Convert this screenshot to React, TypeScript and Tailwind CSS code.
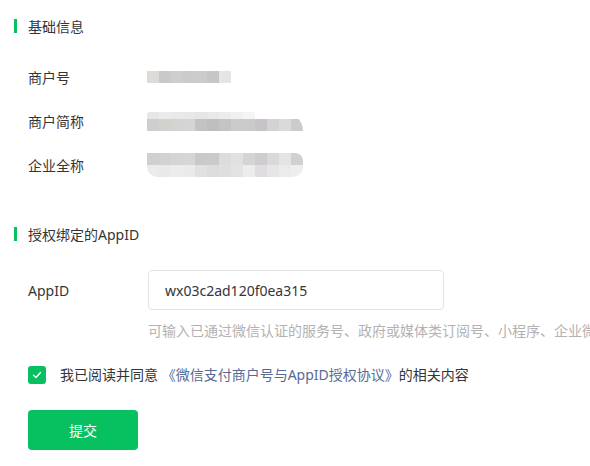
const row1 = ["#dedad8", "#c9c8cb", "#cfcecc", "#cccbcb", "#cdccca", "#c6c5c8", "#e6e5e6"];
const row2a = ["#e6e6e6", "#ebebeb", "#e9e9e9", "#e8e8e8", "#e6e6e6", "#e9e9e9", "#ececec", "#f0f0f0", "#f4f4f4", "#ffffff", "#ffffff", "#ffffff", "#ffffff"];
const row2b = ["#cfcecc", "#d1d1ce", "#d3d3d2", "#d3d5d6", "#c3c2c5", "#bebdc0", "#c4c3c5", "#cccbca", "#cbcaca", "#c7c3c8", "#d3d3d3", "#dadad9", "#cbcacd"];
const row3a = ["#d1d0d0", "#d2d2d1", "#d5d5d4", "#d6d6d6", "#c9c8cb", "#cacaca", "#dbdcdc", "#e0e1e1", "#d6d3d5", "#d0cbcf", "#d9d9d9", "#e4e4e4", "#d2cfd3"];
const row3b = ["#ebebeb", "#e9e9e9", "#ececec", "#eaeaea", "#e2e1e2", "#dcdcdc", "#dfdfdf", "#e3e3e3", "#ececec", "#e0dde0", "#e6e6e6", "#ebebeb", "#eeeeee"];

function Blocks({ colors, h = 12 }: { colors: string[]; h?: number }) {
  return (
    <div className="flex">
      {colors.map((c, i) => (
        <div key={i} className="w-[12px]" style={{ backgroundColor: c, height: h }} />
      ))}
    </div>
  );
}

function SectionTitle({ children }: { children: React.ReactNode }) {
  return (
    <div className="flex items-center h-[20px]">
      <div className="w-[3px] h-[14px] bg-[#07c160] ml-[14px] mr-[11px]" />
      <span className="text-[14px] text-[#353535]">{children}</span>
    </div>
  );
}

export default function App() {
  return (
    <div
      className="w-[590px] h-[466px] bg-white overflow-hidden text-[14px] text-[#353535]"
      style={{ fontFamily: '"Noto Sans", "Noto Sans CJK SC", sans-serif' }}
    >
      <div className="pt-[16px]">
        <SectionTitle>基础信息</SectionTitle>
      </div>

      <div className="flex items-center mt-[30px] h-[22px]">
        <span className="w-[147px] pl-[28px]">商户号</span>
        <Blocks colors={row1} />
      </div>

      <div className="flex items-center mt-[21px] h-[24px]">
        <span className="w-[147px] pl-[28px]">商户简称</span>
        <div className="flex flex-col rounded-tl-[6px] rounded-tr-[40px] overflow-hidden">
          <Blocks colors={row2a} h={7} />
          <Blocks colors={row2b} />
        </div>
      </div>

      <div className="flex items-center mt-[20px] h-[24px]">
        <span className="w-[147px] pl-[28px]">企业全称</span>
        <div className="flex flex-col rounded-b-[10px] rounded-tr-[8px] overflow-hidden">
          <Blocks colors={row3a} />
          <Blocks colors={row3b} />
        </div>
      </div>

      <div className="mt-[47px]">
        <SectionTitle>授权绑定的AppID</SectionTitle>
      </div>

      <div className="flex items-center mt-[26px]">
        <span className="w-[148px] pl-[28px]">AppID</span>
        <div className="w-[296px] h-[40px] border border-[#e2e2e2] rounded-[4px] flex items-center pl-[16px] text-[#353535]">
          wx03c2ad120f0ea315
        </div>
      </div>

      <div className="ml-[148px] mt-[10px] whitespace-nowrap text-[#b2b2b2]">
        可输入已通过微信认证的服务号、政府或媒体类订阅号、小程序、企业微信
      </div>

      <div className="flex items-center mt-[23px] pl-[28px]">
        <div className="w-[18px] h-[18px] rounded-[3px] bg-[#07c160] flex items-center justify-center">
          <svg width="12" height="12" viewBox="0 0 12 12" fill="none">
            <path d="M2.5 6.2 L5 8.5 L9.5 3.5" stroke="white" strokeWidth="1.4" strokeLinecap="round" strokeLinejoin="round" />
          </svg>
        </div>
        <span className="ml-[14px]">
          我已阅读并同意 <span className="text-[#576b95]">《微信支付商户号与AppID授权协议》</span>的相关内容
        </span>
      </div>

      <button className="ml-[28px] mt-[25px] w-[110px] h-[40px] rounded-[4px] bg-[#07c160] text-white text-[14px]">
        提交
      </button>
    </div>
  );
}
